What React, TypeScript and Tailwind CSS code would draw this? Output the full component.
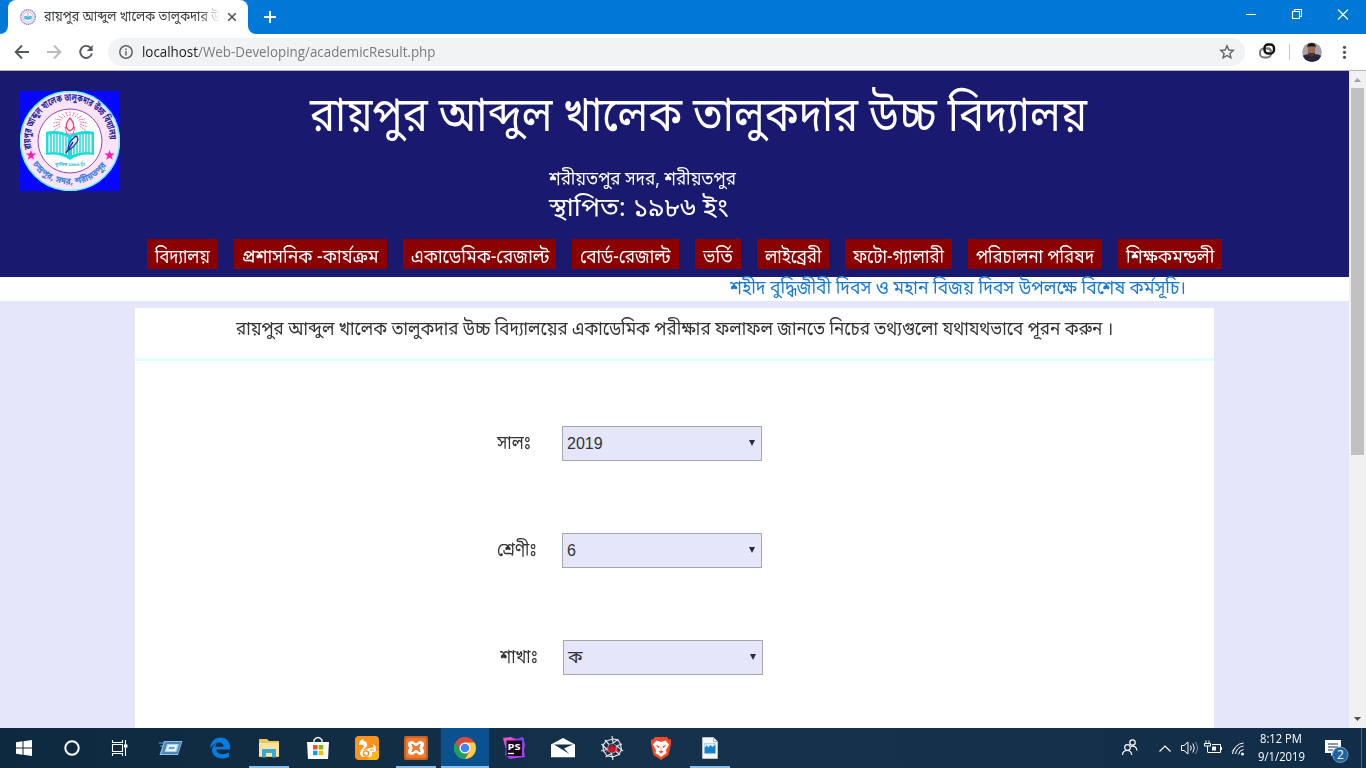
import { useLayoutEffect, useRef, useState, type ReactNode } from "react";

const BN = "font-['Noto_Sans_Bengali','Lohit_Bengali','Liberation_Sans',sans-serif]";

// Condenses or widens one line of text so that it takes exactly `width` pixels.
function Fit({ width, className = "", children }: { width: number; className?: string; children: ReactNode }) {
  const ref = useRef<HTMLSpanElement>(null);
  const [scale, setScale] = useState(1);
  useLayoutEffect(() => {
    if (ref.current) setScale(width / ref.current.offsetWidth);
  }, [width]);
  return (
    <span className="inline-block shrink-0" style={{ width }}>
      <span ref={ref} className={`inline-block origin-left whitespace-pre ${className}`} style={{ transform: `scaleX(${scale})` }}>
        {children}
      </span>
    </span>
  );
}

function Seal({ size }: { size: number }) {
  const rays = Array.from({ length: 15 }, (_, i) => (-105 + i * 15) * (Math.PI / 180));
  return (
    <svg width={size} height={size} viewBox="0 0 100 100" className="block shrink-0">
      <circle cx="50" cy="50" r="49.5" fill="#fbe3f8" stroke="#5ff4ff" strokeWidth="1.6" />
      <circle cx="50" cy="50" r="32" fill="#fff" stroke="#8a2fa0" strokeWidth="0.9" />
      {rays.map((a, i) => (
        <line key={i} x1={50 + 10 * Math.sin(a)} y1={33 - 8 * Math.cos(a)} x2={50 + 17 * Math.sin(a)} y2={36 - 16 * Math.cos(a)} stroke="#f45a9c" strokeWidth="0.9" strokeDasharray="2 .6" />
      ))}
      <path d="M26 41q12-3 24 3q12-6 24-3v23q-13-2-24 5q-11-7-24-5z" fill="#20dcd9" />
      <path d="M28.500 43.500q10-2 19.500 2.500v18q-9-4-19.500-2.500zM71.500 43.500q-10-2-19.500 2.500v18q9-4 19.500-2.500z" fill="#fff" />
      <path d="M31 43v19M34 42.500v19M37 42.500v19M40 43v20M43 44v20M46 45v19M54 45v19M57 44v20M60 43v20M63 42.500v19M66 42.500v19M69 43v19" stroke="#20dcd9" strokeWidth="1.500" />
      <path d="M45 36q5 5 10 0l-2 7h-6z" fill="#fff" stroke="#d64b90" strokeWidth="0.8" />
      <path d="M50 27c5 6 5 10 0 13c-5-3-5-7 0-13z" fill="#ffe7ed" stroke="#e0407a" strokeWidth="1.200" />
      <path d="M48 57q1-7 8-12q3 2 1 6q-3 5-8 8z" fill="#c9f5ff" stroke="#2c2a9a" strokeWidth="1.300" />
      <path d="M46 62l7-11" stroke="#2c2a9a" strokeWidth="1.500" />
      <defs>
        <path id="seal-top" d="M11.500 58A39.500 39.500 0 1 1 88.500 58" />
        <path id="seal-bottom" d="M12 72A44.500 44.500 0 0 0 88 72" />
      </defs>
      <g className={BN} fontWeight="700">
        <text fontSize="10" fill="#23219a" textLength="132" lengthAdjust="spacingAndGlyphs">
          <textPath href="#seal-top" textLength="132" lengthAdjust="spacingAndGlyphs">রায়পুর আব্দুল খালেক তালুকদার উচ্চ বিদ্যালয়</textPath>
        </text>
        <text fontSize="9" fill="#3b7fe0">
          <textPath href="#seal-bottom" startOffset="1" textLength="87" lengthAdjust="spacingAndGlyphs">চন্দ্রপুর, সদর, শরীয়তপুর</textPath>
        </text>
        <text x="35" y="75" fontSize="4.500" fill="#28bdc9" textLength="30" lengthAdjust="spacingAndGlyphs">স্থাপিত ১৯৮৬ ইং</text>
      </g>
      <path d="M11 59l1.300 3.600h3.900l-3.100 2.400l1.200 3.800l-3.300-2.300l-3.300 2.300l1.200-3.800l-3.100-2.400h3.900z" fill="#fb1db4" />
      <path d="M89.500 59l1.300 3.600h3.900l-3.100 2.400l1.200 3.800l-3.300-2.300l-3.300 2.300l1.200-3.800l-3.100-2.400h3.900z" fill="#fb1db4" />
    </svg>
  );
}

// The same seal reduced to the shapes that survive at favicon size.
function Favicon() {
  return (
    <svg width="16" height="16" viewBox="0 0 16 16" className="block shrink-0">
      <circle cx="8" cy="8" r="7.300" fill="#f3e8fa" stroke="#8b8fc0" strokeDasharray="1.500 .5" strokeWidth="1.300" />
      <circle cx="8" cy="8" r="5" fill="#fff" stroke="#b58fc8" strokeWidth=".5" />
      <path d="M4.300 7q2-.5 3.700.5Q9.700 6.500 11.700 7v3.300q-2-.3-3.700.8q-1.700-1.100-3.700-.8z" fill="#48bede" />
      <path d="M8 4v3" stroke="#ec91b8" />
    </svg>
  );
}

function TabStrip() {
  return (
    <div className="flex h-[34px] bg-[#0078d7]">
      <div className="h-[34px] w-2 bg-white">
        <div className="h-[34px] w-2 rounded-br-lg bg-[#0078d7]" />
      </div>
      <div className="flex w-[240px] items-center rounded-t-lg bg-white pl-3">
        <Favicon />
        <div className={`ml-2 h-[24px] w-[176px] overflow-hidden text-[14px] leading-[26px] text-[#3c4043] [mask-image:linear-gradient(to_right,black_88%,transparent_100%)] ${BN}`}>
          <Fit width={176}>রায়পুর আব্দুল খালেক তালুকদার উ</Fit>
        </div>
        <svg width="10" height="10" viewBox="0 0 10 10" className="ml-[7px]" stroke="#4a4d51" strokeWidth="1.5">
          <path d="M1.200 1.200l7.600 7.600M8.800 1.200l-7.600 7.600" />
        </svg>
      </div>
      <div className="h-[34px] w-2 bg-white">
        <div className="h-[34px] w-2 rounded-bl-lg bg-[#0078d7]" />
      </div>
      <svg width="14" height="34" viewBox="0 0 14 34" className="ml-[7px]" stroke="#fff" strokeWidth="2">
        <path d="M1 17h12M7 11v12" />
      </svg>
      <svg width="120" height="34" viewBox="0 0 120 34" className="ml-auto" fill="none" stroke="#fff">
        <path d="M0 14.500h10M46.500 11.500h7v7h-7zM48.500 11v-1.500h7v7h-1.500M92 9.500l10 10M102 9.500l-10 10" strokeWidth="1.100" />
      </svg>
    </div>
  );
}

function Toolbar() {
  return (
    <div className="flex h-[37px] items-center border-b border-[#b6b4b6] bg-white">
      <svg width="94" height="36" viewBox="0 0 94 36" className="ml-[14px] shrink-0" fill="none" strokeWidth="1.900">
        <path d="M15 18H2.500M8 11.500L1.700 18L8 24.500" stroke="#55585c" />
        <path d="M33 18h12.500M40 11.500l6.300 6.500l-6.300 6.500" stroke="#b9bbbe" />
        <path d="M76.600 13.800A6 6 0 1 0 78 19.500" stroke="#55585c" />
        <path d="M78.700 11v6h-6z" fill="#55585c" />
      </svg>
      <div className="flex h-7 w-[1137px] shrink-0 items-center rounded-full bg-[#f1f3f4] pr-[10px] pl-[11px]">
        <svg width="14" height="14" viewBox="0 0 14 14" fill="none" stroke="#5f6368" strokeWidth="1.500">
          <circle cx="7" cy="7" r="6.200" />
          <path d="M7 6.200v4.300M7 3.500v1.600" />
        </svg>
        <div className="ml-[9px] text-[14px] leading-7 text-[#777b80] font-['Open_Sans','Noto_Sans',sans-serif]">
          <Fit width={293}>
            <span className="text-[#202124]">localhost</span>/Web-Developing/academicResult.php
          </Fit>
        </div>
        <svg width="16" height="16" viewBox="0 0 16 16" className="ml-auto" fill="none" stroke="#5f6368" strokeWidth="1.400">
          <path d="M8 1.800l1.800 4.200l4.500.4l-3.400 3l1 4.500L8 11.500l-3.900 2.400l1-4.500l-3.400-3l4.500-.4z" />
        </svg>
      </div>
      <svg width="120" height="36" viewBox="0 0 120 36" className="shrink-0" fill="none">
        <rect x="15" y="14.500" width="11" height="9" rx="4" stroke="#777" strokeWidth="2" />
        <rect x="19.500" y="10.500" width="9.500" height="9" rx="3.500" stroke="#111" strokeWidth="2.400" />
        <path d="M22 14.500h1.500q2.500.2 2.500 3v1" stroke="#777" strokeWidth="1.800" />
        <path d="M44.500 10v16" stroke="#c6c8ca" />
        <defs>
          <clipPath id="avatar">
            <circle cx="67" cy="18.300" r="9.800" />
          </clipPath>
        </defs>
        <g clipPath="url(#avatar)">
          <path d="M57 8h20v21H57z" fill="#a9a1a6" />
          <path d="M57 22q5-2 7-2h5q4 0 8 2v8H57z" fill="#29243f" />
          <ellipse cx="66.500" cy="16.500" rx="3.800" ry="5.800" fill="#9c6a58" />
          <path d="M62.500 14q-1-5 4-5t4 5l-1-1.500h-6z" fill="#1d171a" />
          <path d="M63.300 18.500q3.200 1 6.400 0q0 4-3.200 4t-3.200-4z" fill="#4b302b" />
        </g>
        <g fill="#4e5155">
          <circle cx="99.500" cy="13.300" r="1.600" />
          <circle cx="99.500" cy="18.300" r="1.600" />
          <circle cx="99.500" cy="23.300" r="1.600" />
        </g>
      </svg>
    </div>
  );
}

const NAV = [
  { label: "বিদ্যালয়", box: 71, text: 55 },
  { label: "প্রশাসনিক -কার্যক্রম", box: 153, text: 137 },
  { label: "একাডেমিক-রেজাল্ট", box: 153, text: 138 },
  { label: "বোর্ড-রেজাল্ট", box: 107, text: 91 },
  { label: "ভর্তি", box: 46, text: 30 },
  { label: "লাইব্রেরী", box: 72, text: 56 },
  { label: "ফটো-গ্যালারী", box: 107, text: 91 },
  { label: "পরিচালনা পরিষদ", box: 134, text: 118 },
  { label: "শিক্ষকমন্ডলী", box: 104, text: 88 },
];

function Header() {
  return (
    <header className={`flex h-[206px] flex-col bg-[#191970] text-white ${BN}`}>
      <div className="flex h-[168px]">
        <div className="ml-5 pt-5">
          <div className="h-[100px] w-[100px] bg-[#0606fb]">
            <Seal size={100} />
          </div>
        </div>
        <div className="ml-[190px] flex flex-col">
          <h1 className="mt-[10px] h-[72px] text-[48px] leading-[77px]">
            <Fit width={777}>রায়পুর আব্দুল খালেক তালুকদার উচ্চ বিদ্যালয়</Fit>
          </h1>
          <p className="mt-[14px] ml-[239px] h-[26px] text-[19px] leading-[28px]">
            <Fit width={187}>শরীয়তপুর সদর, শরীয়তপুর</Fit>
          </p>
          <p className="ml-[239px] h-[32px] text-[26px] leading-[34px]">
            <Fit width={180}>স্থাপিত: ১৯৮৬ ইং</Fit>
          </p>
        </div>
      </div>
      <nav className="ml-[147px] flex gap-4">
        {NAV.map((n) => (
          <a key={n.label} className="flex h-[30px] justify-center bg-[#8b0000] text-[19px] leading-[39px]" style={{ width: n.box }}>
            <Fit width={n.text}>{n.label}</Fit>
          </a>
        ))}
      </nav>
    </header>
  );
}

function Field({ label, labelWidth, indent, gap, value }: { label: string; labelWidth: number; indent: number; gap: number; value: string }) {
  return (
    <div className="flex h-[35px] items-center text-[#333]" style={{ marginLeft: indent }}>
      <div className={`h-[35px] text-[18.5px] leading-[38px] ${BN}`}>
        <Fit width={labelWidth}>{label}</Fit>
      </div>
      <div
        className="flex h-[35px] w-[200px] items-center justify-between border border-[#a6a6ae] bg-[#e6e6fa] pr-[6px] pl-1 text-[16px] leading-[33px] font-['Liberation_Sans','Noto_Sans_Bengali',sans-serif]"
        style={{ marginLeft: gap }}
      >
        <span className={value === "ক" ? "text-[18px]" : ""}>{value}</span>
        <svg width="6" height="6" viewBox="0 0 6 6" className="-mt-[2px]">
          <path d="M0 0h6l-3 6z" fill="#2b2b33" />
        </svg>
      </div>
    </div>
  );
}

function Page() {
  return (
    <div className="flex h-[657px] overflow-hidden">
      <main className="w-[1349px] bg-[#e6e6fa]">
        <Header />
        <div className={`flex h-6 bg-white pl-[730px] text-[18.5px] leading-[26px] text-[#1a78d2] ${BN}`}>
          <Fit width={456}>শহীদ বুদ্ধিজীবী দিবস ও মহান বিজয় দিবস উপলক্ষে বিশেষ কর্মসূচি।</Fit>
        </div>
        <section className="mt-[7px] ml-[135px] h-[420px] w-[1079px] bg-white">
          <div className={`h-[53px] border-b-[3px] border-[#e0ffff] pl-[101px] text-[18.5px] leading-[46px] text-[#333] ${BN}`}>
            <Fit width={877}>রায়পুর আব্দুল খালেক তালুকদার উচ্চ বিদ্যালয়ের একাডেমিক পরীক্ষার ফলাফল জানতে নিচের তথ্যগুলো যথাযথভাবে পূরন করুন ।</Fit>
          </div>
          <div className="flex flex-col gap-[72px] pt-[65px]">
            <Field label="সালঃ" labelWidth={34} indent={362} gap={31} value="2019" />
            <Field label="শ্রেণীঃ" labelWidth={40} indent={362} gap={25} value="6" />
            <Field label="শাখাঃ" labelWidth={38} indent={365} gap={25} value="ক" />
          </div>
        </section>
      </main>
      <div className="flex w-[17px] flex-col items-center bg-[#f1f1f1]">
        <svg width="17" height="17" viewBox="0 0 17 17">
          <path d="M5 11l3.500-4l3.500 4z" fill="#a3a3a3" />
        </svg>
        <div className="h-[367px] w-[13px] bg-[#c1c1c1]" />
        <svg width="17" height="17" viewBox="0 0 17 17" className="mt-auto">
          <path d="M5 6l3.500 4l3.500-4z" fill="#505050" />
        </svg>
      </div>
    </div>
  );
}

type AppEntry = { name: string; lead?: number; open?: boolean; active?: boolean; icon: ReactNode };

const APPS: AppEntry[] = [
  { name: "start", icon: <path d="M4 6.300l6.500-1v6.200H4zM11.500 5.200l8.500-1.200v7.500h-8.500zM4 12.500h6.500v6.200l-6.500-1zM11.500 12.500H20V20l-8.500-1.200z" fill="#fff" /> },
  { name: "search", icon: <circle cx="12" cy="12" r="6.700" fill="none" stroke="#fff" strokeWidth="2" /> },
  {
    name: "tasks",
    icon: (
      <g fill="none" stroke="#fff" strokeWidth="1.100">
        <path d="M4.500 8.500h10v7h-10zM4.500 4v2.500h10V4M4.500 20v-2.500h10V20M17.500 4v16" />
        <path d="M16 8.500h3.500v3H16z" fill="#fff" stroke="none" />
      </g>
    ),
  },
  {
    name: "run",
    lead: 3,
    icon: (
      <g>
        <path d="M5 5h18.500l-4.500 14H.5z" fill="#8fbfe3" />
        <path d="M6 6h16.300l-3.700 12H2.300z" fill="#4d86b8" />
        <path d="M8 8h12l-2.500 8H5.500z" fill="#a9d4ee" />
        <path d="M9.500 10h7.500l-1.200 4H8.300z" stroke="#fff" strokeWidth="1.500" fill="#6fa5cd" />
        <path d="M0 7h5M1 10h4" stroke="#6c9fc6" />
      </g>
    ),
  },
  { name: "edge", lead: 1, icon: <path d="M2 12C3 5 7 1.500 12.500 1.500C19 1.500 22 6 22 11v2.500H8.200c.3 5 7.500 6 12.800 3v4.300C16 23.500 10 23 6.500 19.800C2 15 4 9.500 9 7c-1.200 1.300-1.600 2.500-1.800 3.800h8.300C15.600 5.500 9 4 2 12z" fill="#087ddd" /> },
  {
    name: "files",
    lead: 1,
    open: true,
    icon: (
      <g>
        <path d="M2 3h8l2 2h10v16H2z" fill="#efc65e" />
        <path d="M2 7h20v13H2z" fill="#fbe49b" />
        <path d="M5 13h14v8.500h-4V17H9v4.500H5z" fill="#38a9d6" />
      </g>
    ),
  },
  {
    name: "store",
    icon: (
      <g>
        <path d="M8 6V4q4-5 8 0v2" fill="none" stroke="#fff" strokeWidth="1.300" />
        <path d="M1 6h22l-1 17H2z" fill="#fff" />
        <path d="M7 9h4.500v4.500H7z" fill="#f25022" />
        <path d="M12.700 9h4.500v4.500h-4.500z" fill="#7fba00" />
        <path d="M7 14.700h4.500v4.500H7z" fill="#00a4ef" />
        <path d="M12.700 14.700h4.500v4.500h-4.500z" fill="#ffb900" />
      </g>
    ),
  },
  {
    name: "uc",
    icon: (
      <g>
        <rect width="24" height="24" rx="4" fill="#fb931d" />
        <path d="M12 24q5-8 12-10v6q0 4-4 4z" fill="#ffb617" />
        <path d="M4 9q0-5 4.500-6q-1 2 .5 2q4 1 3 5q-1 2-4 4q2 .5 4-1q3-2 6-1q1-2 0-4q4 2 3 6q-1 3-4 2q1 3-2 5H8q-3-1-3-4q0-2 2-4q3-3 1-4q-2-1-4 0z" fill="#fff" />
        <circle cx="11" cy="17.500" r="2.600" fill="#fff" stroke="#f68a1c" strokeWidth="1.300" />
        <path d="M9 20l2-2.500M15 14q3-1 4 1" stroke="#f68a1c" fill="none" />
      </g>
    ),
  },
  {
    name: "xampp",
    open: true,
    icon: (
      <g>
        <rect width="24" height="24" rx="2" fill="#c9631f" />
        <rect x="2" y="2" width="20" height="20" rx="2" fill="#f2792f" />
        <path d="M8 5q-4 0-4 3.500q0 2 1.500 3.500Q4 13.500 4 15.500Q4 19 8 19q2 0 3-2h2q1 2 3 2q4 0 4-3.500q0-2-1.500-3.500Q20 10.500 20 8.500Q20 5 16 5q-2 0-3 2h-2q-1-2-3-2z" fill="#fff" />
        <path d="M7.500 8h1.500l2 2h2l2-2h1.500l-.5 2.500l-1 1.500l1 1.500l.5 2.500H15l-2-2h-2l-2 2H7.500l.5-2.500l1-1.500l-1-1.500z" fill="#f2792f" />
      </g>
    ),
  },
  {
    name: "chrome",
    lead: 1,
    open: true,
    active: true,
    icon: (
      <g>
        <circle cx="12" cy="12" r="11" fill="#dd4b3e" />
        <path d="M2.470 6.500L7.500 15l4.500 2.500l2 .5L12 23A11 11 0 0 1 2.470 6.500z" fill="#1aa15f" />
        <path d="M12 6.500h9.500A11 11 0 0 1 12 23l4.800-8.200z" fill="#fdce45" />
        <circle cx="12" cy="12" r="5.500" fill="#fff" />
        <circle cx="12" cy="12" r="4.300" fill="#4285f4" />
      </g>
    ),
  },
  {
    name: "phpstorm",
    icon: (
      <g>
        <path d="M1 2l8-1l6 2l6-2l2 8l-1 6l1 6l-8 1l-7 1l-5-4l1-6z" fill="#a93df0" />
        <path d="M1 2l8-1l4 4l-9 8z" fill="#e252c9" />
        <path d="M15 3l6-2l2 8l-4 5z" fill="#754be3" />
        <path d="M4.500 4.500h15.500v15.500H4.500z" fill="#170d1a" />
        <path d="M6 17.500h6" stroke="#fff" strokeWidth="1.300" />
        <text x="5.500" y="13.500" fontSize="9.500" fontWeight="700" fill="#fff" textLength="13" lengthAdjust="spacingAndGlyphs" className="font-['Open_Sans',sans-serif]">PS</text>
      </g>
    ),
  },
  {
    name: "mail",
    icon: (
      <g>
        <path d="M0 8.500L12 2l12 6.500v12.700H0z" fill="#fff" />
        <path d="M3 8.500h19l-9 4l5.500 5.500z" fill="#12314b" />
      </g>
    ),
  },
  {
    name: "web",
    icon: (
      <g fill="none">
        <path d="M4 11l5 1l3-4l2 3l5-2l-2 4l3 3l-5-1l-2 3l-3-3l-5 2l2-3z" fill="#ce1726" />
        <g stroke="#dfe4e8" strokeWidth="1.200">
          <path d="M12 0l1 7l5-3.500M22 8l-5.500 2L23 15M20 19l-4-3.500M13 24l-1.500-6.500L5.500 21M1 15l6-1.500L1.500 8M5 4l4 4.500" />
          <path d="M13 3l5 .8l2.500 4.500l1 5.500l-3 5l-5.500 2l-6-1l-3.500-5l-.5-5.500L6 5z" />
        </g>
        <path d="M13 7l3.500 3l-.5 5.500l-4.500 2l-4.500-4l2-5z" stroke="#aab4bd" strokeWidth=".8" />
      </g>
    ),
  },
  {
    name: "brave",
    icon: (
      <g>
        <path d="M6 1h12l2 2.500l2-.2v5L19.500 19L12 24l-7.500-5L2 8.300v-5l2 .2z" fill="#f04b24" />
        <path d="M7.500 4.500L12 6l4.500-1.500l3.500 4l-3 5.500l.5 3l-5.500 4l-5.500-4l.5-3l-3-5.500z" fill="#fff" />
        <path d="M6.500 9l4 1.200L9.500 12zM17.500 9l-4 1.200l1 1.800zM9.500 15.500l2.500-1l2.500 1l-2.500 2z" fill="#f04b24" />
        <path d="M12 11v3" stroke="#f4a38e" strokeWidth=".8" />
      </g>
    ),
  },
  {
    name: "photo",
    open: true,
    icon: (
      <g>
        <path d="M4.500 1.500h11l4 4V22.500h-15z" fill="#f5f7f9" stroke="#c9d4df" strokeWidth=".7" />
        <path d="M15.500 1.500v4h4" fill="none" stroke="#9fb3c6" />
        <path d="M6.500 7.500h11v10h-11z" fill="#1681d1" />
        <path d="M6.500 12l2-2.500l2 2l2-2.500l2 2l3-2.500v-1h-11z" fill="#d9effb" />
      </g>
    ),
  },
];

function Taskbar() {
  return (
    <footer className="flex h-10 bg-[linear-gradient(to_right,#0c293f,#16324b_50%,#112d48)]">
      {APPS.map((a, i) => (
        <div key={a.name} className={`flex shrink-0 flex-col items-center ${a.active ? "bg-[#09528f]" : ""}`} style={{ width: i < 6 || a.active ? 48 : 49, marginLeft: a.lead ?? 0 }}>
          <svg width="24" height="24" viewBox="0 0 24 24" className="mt-2 mb-[6px] block">
            {a.icon}
          </svg>
          {a.open && <div className={`h-[2px] bg-[#82bef0] ${a.active ? "w-12" : "w-10"}`} />}
        </div>
      ))}
      <svg width="134" height="40" viewBox="0 0 134 40" className="ml-auto shrink-0" fill="none" stroke="#fff" strokeWidth="1.200">
        <circle cx="9.500" cy="19.500" r="2.800" />
        <path d="M4.500 27q0-4.500 5-4.500q3.500 0 4.300 4.500" />
        <circle cx="14.500" cy="14.500" r="2.700" />
        <path d="M13 18.500q5-1.500 6 4" />
        <path d="M41.500 23.500l5.500-5.500l5.500 5.500" />
        <path d="M63.500 17.500h2.500l4-3.500v12l-4-3.500h-2.500zM72.500 17.500q1.500 2.500 0 5M74.800 15.500q3 4.500 0 9" strokeWidth="1" />
        <path d="M77.500 14q4 6 0 12" stroke="#7790a5" strokeWidth="1" />
        <path d="M94 16.500h8.500v8H90M103.500 19v3M88 12.500v3M91 12.500v3M86.500 15.500h6v2.500h-6zM89.500 18v6.500" strokeWidth="1" />
        <path d="M94 18.500h4v4h-4z" fill="#fff" stroke="none" />
        <path d="M114.500 26a12 12 0 0 1 11-11M117.500 26a9 9 0 0 1 8-8M120.500 26.500a6 6 0 0 1 5-5M114 23.500l3-3" strokeWidth="1" />
        <circle cx="124.500" cy="26" r="1.500" fill="#fff" stroke="none" />
      </svg>
      <div className="ml-1 flex w-[50px] shrink-0 flex-col items-center pt-[2px] text-[12px] leading-[18px] text-white font-['Open_Sans','Noto_Sans',sans-serif]">
        <Fit width={42}>8:12 PM</Fit>
        <Fit width={47}>9/1/2019</Fit>
      </div>
      <svg width="60" height="40" viewBox="0 0 60 40" className="shrink-0">
        <path d="M19 12h16v13h-7l-3 3v-3h-6z" fill="#fff" />
        <path d="M22 16h10M22 19h10M22 22h5" stroke="#15334e" />
        <circle cx="34.300" cy="26.800" r="7.700" fill="#1c63a0" stroke="#6c9bc0" />
        <text x="31" y="31.300" fontSize="12" fill="#fff" className="font-['Open_Sans',sans-serif]">2</text>
        <path d="M55.500 0v40" stroke="#4c6478" />
      </svg>
    </footer>
  );
}

export default function App() {
  return (
    <div className="flex h-[768px] w-[1366px] flex-col overflow-hidden bg-white">
      <TabStrip />
      <Toolbar />
      <Page />
      <Taskbar />
    </div>
  );
}
